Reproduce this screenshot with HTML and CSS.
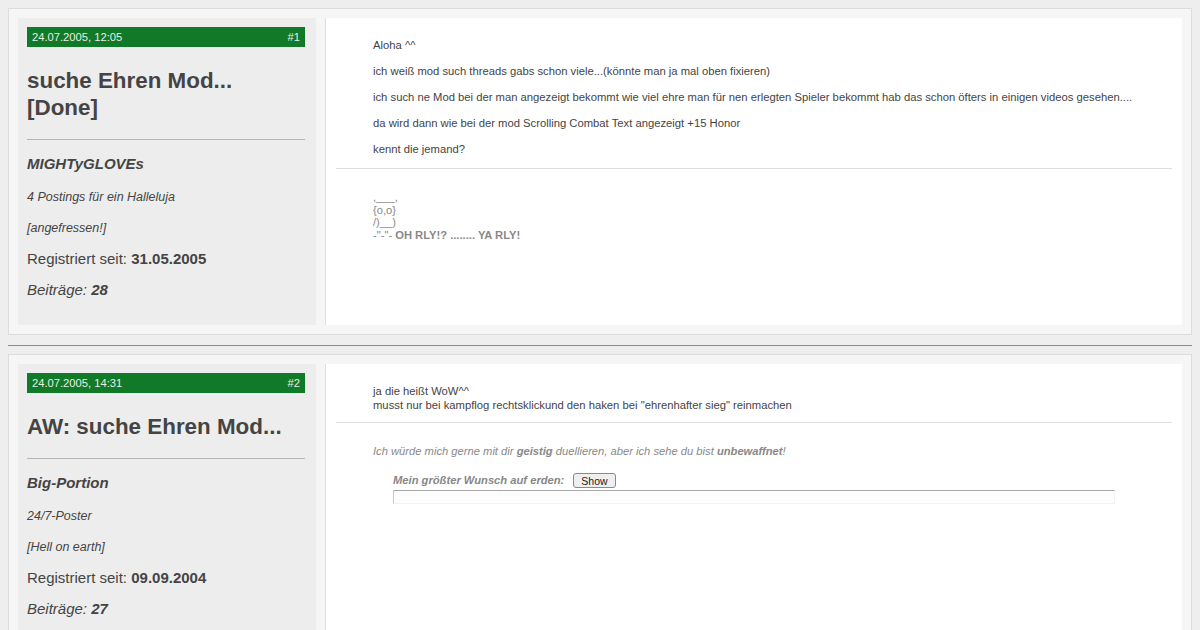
FILE: index.html
```html
<!DOCTYPE html>
<html lang="de">
<head>
    <meta charset="UTF-8">
    <meta name="viewport" content="width=device-width, initial-scale=1.0">
    <title>suche Ehren Mod... [Done]</title>
    <link rel="stylesheet" href="styles.css">
</head>
<body>
    <div class="post">
        <div class="post-side">
            <div class="post-head">
                <span>24.07.2005, 12:05</span>
                <span>#1</span>
            </div>
            <h2 class="post-title">suche Ehren Mod... [Done]</h2>
            <hr class="side-rule">
            <div class="user-name">MIGHTyGLOVEs</div>
            <div class="user-title">4 Postings für ein Halleluja</div>
            <div class="user-title">[angefressen!]</div>
            <div class="user-info">Registriert seit: <b>31.05.2005</b></div>
            <div class="user-info"><i>Beiträge: <b>28</b></i></div>
        </div>

        <div class="post-main">
            <div class="post-text">
                <p>Aloha ^^</p>
                <p>ich weiß mod such threads gabs schon viele...(könnte man ja mal oben fixieren)</p>
                <p>ich such ne Mod bei der man angezeigt bekommt wie viel ehre man für nen erlegten Spieler bekommt hab das schon öfters in einigen videos gesehen....</p>
                <p>da wird dann wie bei der mod Scrolling Combat Text angezeigt +15 Honor</p>
                <p>kennt die jemand?</p>
            </div>
            <div class="signature">
                ,___,<br>
                {o,o}<br>
                /)__)<br>
                -"-"- <b>OH RLY!? ........ YA RLY!</b>
            </div>
        </div>
    </div>

    <hr class="post-split">

    <div class="post">
        <div class="post-side">
            <div class="post-head">
                <span>24.07.2005, 14:31</span>
                <span>#2</span>
            </div>
            <h2 class="post-title">AW: suche Ehren Mod...</h2>
            <hr class="side-rule">
            <div class="user-name">Big-Portion</div>
            <div class="user-title">24/7-Poster</div>
            <div class="user-title">[Hell on earth]</div>
            <div class="user-info">Registriert seit: <b>09.09.2004</b></div>
            <div class="user-info"><i>Beiträge: <b>27</b></i></div>
        </div>

        <div class="post-main">
            <div class="post-text plain">
                ja die heißt WoW^^<br>
                musst nur bei kampflog rechtsklickund den haken bei "ehrenhafter sieg" reinmachen
            </div>
            <div class="signature">
                <i>Ich würde mich gerne mit dir <b>geistig</b> duellieren, aber ich sehe du bist <b>unbewaffnet</b>!</i>
                <div class="spoiler">
                    <div class="spoiler-head">
                        <b><i>Mein größter Wunsch auf erden:</i></b>
                        <button type="button" class="spoiler-btn">Show</button>
                    </div>
                    <div class="spoiler-box"></div>
                </div>
            </div>
        </div>
    </div>
</body>
</html>
```

FILE: styles.css
```css
body {
    font-family: "Liberation Sans", Arial, sans-serif;
    color: #444;
    background-color: #eeeeee;
    margin: 8px;
}
.post {
    display: flex;
    border: 1px solid #dcdcdc;
    background-color: #f6f6f6;
    padding: 9px;
}
.post-side {
    width: 298px;
    flex-shrink: 0;
    box-sizing: border-box;
    padding: 9px 11px 9px 9px;
    background-color: #ededed;
}
.post-head {
    display: flex;
    justify-content: space-between;
    height: 20px;
    line-height: 20px;
    padding: 0 5px;
    background-color: #107a28;
    color: #e6efe6;
    font-size: 11.2px;
}
.post-title {
    font-size: 22.4px;
    line-height: 27px;
    margin: 20px 0 18px;
}
.side-rule {
    border: 0;
    border-top: 1px solid #b4b4b4;
    margin: 0;
}
.user-name,
.user-title,
.user-info {
    line-height: 18px;
    margin-bottom: 13px;
}
.user-name {
    margin-top: 15px;
    margin-bottom: 15px;
    font-size: 15px;
    font-weight: bold;
    font-style: italic;
}
.user-title {
    font-size: 12.5px;
    font-style: italic;
}
.user-info {
    font-size: 15px;
}
.user-info:last-child {
    margin-bottom: 17px;
}
.post-main {
    flex: 1;
    margin-left: 9px;
    border-left: 1px solid #dedede;
    background-color: #fff;
    padding: 9px 10px 10px;
}
.post-text {
    padding: 0 37px;
    font-size: 11.25px;
    line-height: 15px;
}
.post-text p {
    margin: 11px 0;
}
.post-text.plain {
    margin: 11px 0 10px;
    line-height: 14px;
}
.signature {
    border-top: 1px solid #dedede;
    padding: 22px 37px 10px;
    color: #888;
    font-size: 11.2px;
    line-height: 12.7px;
}
.spoiler {
    margin: 15px 20px 0;
}
.spoiler-head {
    display: flex;
    align-items: center;
    gap: 9px;
    height: 16px;
    margin-bottom: 1px;
}
.spoiler-btn {
    height: 15px;
    padding: 0 7px;
    font-family: "Liberation Sans", Arial, sans-serif;
    font-size: 10.5px;
    line-height: 12px;
    color: #222;
    background-color: #efefef;
    border: 1px solid #8a8a8a;
    border-radius: 3px;
}
.spoiler-box {
    height: 12px;
    border: 1px solid #f2f2f2;
    border-top-color: #a8a8a8;
    border-left-color: #c8c8c8;
    background-color: #fdfdfd;
}
.post-split {
    border: 0;
    border-top: 1px solid #8c8c8c;
    margin: 10px 0 8px;
}
```
